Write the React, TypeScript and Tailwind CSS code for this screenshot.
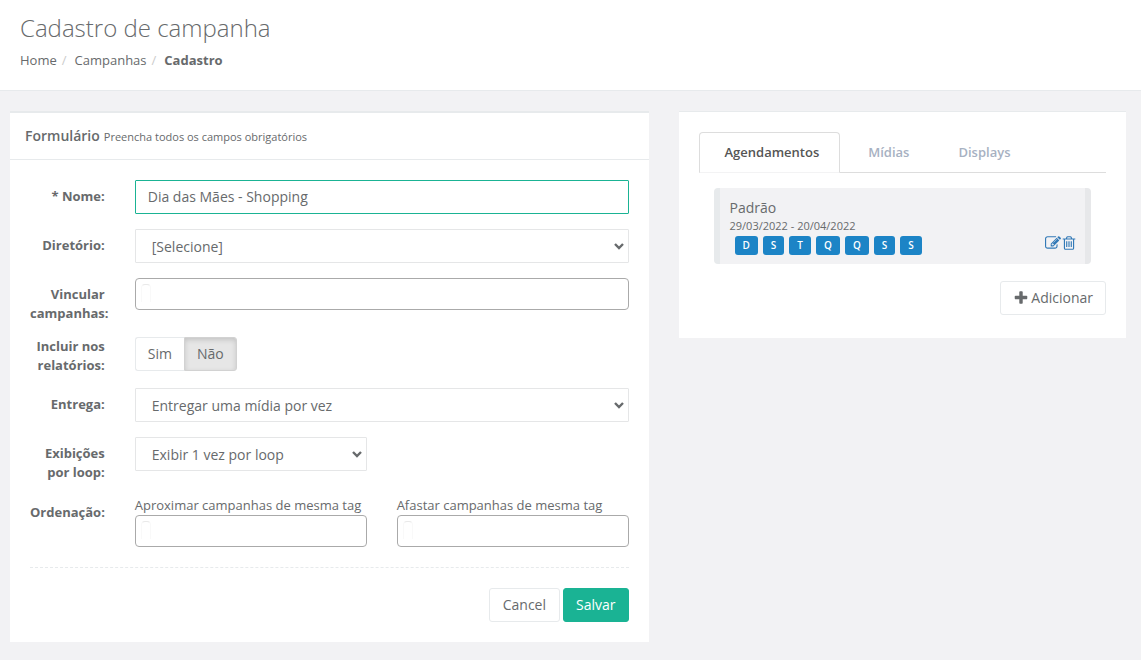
import { useState, type ReactNode } from "react";

const weekdays = ["D", "S", "T", "Q", "Q", "S", "S"];
const tabs = ["Agendamentos", "Mídias", "Displays"];

const labelClass = "w-2/12 shrink-0 px-[15px] text-right text-[13px] leading-[19px] font-bold";
const buttonClass = "h-[34px] rounded-[3px] border text-sm";

function Icon({ d, className }: { d: string; className: string }) {
  return (
    <svg viewBox="0 0 1792 1792" fill="currentColor" className={className} aria-hidden="true">
      <path d={d} />
    </svg>
  );
}

const EDIT =
  "M888 1184l116-116-152-152-116 116v56h96v96h56zm440-720q-16-16-33 1l-350 350q-17 17-1 33t33-1l350-350q17-17 1-33zm80 594v190q0 119-84.5 203.5t-203.5 84.5h-832q-119 0-203.5-84.5t-84.5-203.5v-832q0-119 84.5-203.5t203.5-84.5h832q63 0 117 25 15 7 18 23 3 17-9 29l-49 49q-14 14-32 8-23-6-45-6h-832q-66 0-113 47t-47 113v832q0 66 47 113t113 47h832q66 0 113-47t47-113v-126q0-13 9-22l64-64q15-15 35-7t20 29zm-96-738l288 288-672 672h-288v-288zm444 132l-92 92-288-288 92-92q28-28 68-28t68 28l152 152q28 28 28 68t-28 68z";
const TRASH =
  "M704 736v576q0 14-9 23t-23 9h-64q-14 0-23-9t-9-23v-576q0-14 9-23t23-9h64q14 0 23 9t9 23zm256 0v576q0 14-9 23t-23 9h-64q-14 0-23-9t-9-23v-576q0-14 9-23t23-9h64q14 0 23 9t9 23zm256 0v576q0 14-9 23t-23 9h-64q-14 0-23-9t-9-23v-576q0-14 9-23t23-9h64q14 0 23 9t9 23zm128 724v-948h-896v948q0 22 7 40.5t14.5 27 10.5 8.5h832q3 0 10.5-8.5t14.5-27 7-40.5zm-672-1076h448l-48-117q-7-9-17-11h-317q-10 2-17 11zm928 32v64q0 14-9 23t-23 9h-96v948q0 83-47 143.5t-113 60.5h-832q-66 0-113-58.5t-47-141.5v-952h-96q-14 0-23-9t-9-23v-64q0-14 9-23t23-9h309l70-167q15-37 54-63t79-26h320q40 0 79 26t54 63l70 167h309q14 0 23 9t9 23z";
const PLUS =
  "M1600 736v192q0 40-28 68t-68 28h-416v416q0 40-28 68t-68 28h-192q-40 0-68-28t-28-68v-416h-416q-40 0-68-28t-28-68v-192q0-40 28-68t68-28h416v-416q0-40 28-68t68-28h192q40 0 68 28t28 68v416h416q40 0 68 28t28 68z";

function Field({ label, htmlFor, children }: { label: string; htmlFor: string; children: ReactNode }) {
  return (
    <div className="-mx-[15px] flex">
      <label htmlFor={htmlFor} className={`${labelClass} -mb-px pt-[7px]`}>
        {label}
      </label>
      <div className="min-w-0 flex-1 px-[15px]">{children}</div>
    </div>
  );
}

function Select({ id, option }: { id: string; option: string }) {
  return (
    <div className="relative">
      <select
        id={id}
        className="h-[34px] w-full appearance-none rounded-[1px] border border-[#e5e6e7] bg-white pt-[2px] pr-6 pl-4 text-sm text-[#676a6c]"
      >
        <option>{option}</option>
      </select>
      <svg
        viewBox="0 0 10 7"
        fill="none"
        stroke="currentColor"
        strokeWidth="2.4"
        className="pointer-events-none absolute top-[14px] right-[5px] h-[7px] w-[10px]"
        aria-hidden="true"
      >
        <path d="M1 1l4 4 4-4" />
      </svg>
    </div>
  );
}

function TagBox({ id }: { id: string }) {
  return (
    <div className="flex h-8 items-start rounded-[4px] border border-[#aaaaaa] bg-white px-[5px] pt-[5px]">
      <input
        id={id}
        type="text"
        className="h-[18px] w-[10px] rounded-t-[4px] border border-b-0 border-x-[#f9f9f9] border-t-[#e9e9e9] outline-none"
      />
    </div>
  );
}

export default function App() {
  const [name, setName] = useState("Dia das Mães - Shopping");
  const [report, setReport] = useState(false);
  const [tab, setTab] = useState("Agendamentos");

  return (
    <div className="min-h-screen bg-[#f2f2f4] font-['Open_Sans',sans-serif] text-[13px] leading-[19px] text-[#676a6c]">
      <header className="border-b border-[#e7eaec] bg-white px-5 pt-[15px] pb-5">
        <h1 className="text-2xl leading-[26px] font-light">Cadastro de campanha</h1>
        <nav aria-label="Navegação" className="mt-[10px]">
          <ol className="flex">
            <li>
              <a href="#home">Home</a>
            </li>
            <li className="before:px-[5px] before:text-[#cccccc] before:content-['/']">
              <a href="#campanhas" className="pl-[3px]">Campanhas</a>
            </li>
            <li className="before:px-[5px] before:text-[#cccccc] before:content-['/']">
              <strong className="pl-[3px]">Cadastro</strong>
            </li>
          </ol>
        </nav>
      </header>

      <main className="-ml-[5px] flex items-start pt-5 pb-[18px]">
        <div className="w-7/12 px-[15px]">
          <section className="border-t-2 border-[#e7eaec] bg-white">
            <div className="flex h-[47px] items-center gap-1 border-b border-[#e7eaec] px-[15px]">
              <h2 className="text-sm font-semibold">Formulário</h2>
              <small className="text-[11px]">Preencha todos os campos obrigatórios</small>
            </div>
            <form className="flex flex-col gap-[15px] p-5" onSubmit={(e) => e.preventDefault()}>
              <Field label="* Nome:" htmlFor="nome">
                <input
                  id="nome"
                  type="text"
                  value={name}
                  onChange={(e) => setName(e.target.value)}
                  className="h-[34px] w-full rounded-[1px] border border-[#1ab394] px-3 pb-[2px] text-sm outline-none"
                />
              </Field>
              <Field label="Diretório:" htmlFor="diretorio">
                <Select id="diretorio" option="[Selecione]" />
              </Field>
              <Field label="Vincular campanhas:" htmlFor="vincular">
                <TagBox id="vincular" />
              </Field>
              <div className="-mx-[15px] flex h-9" role="group" aria-labelledby="relatorios">
                <span id="relatorios" className={labelClass}>
                  Incluir nos relatórios:
                </span>
                <div className="flex px-[15px]">
                  <button
                    type="button"
                    aria-pressed={report}
                    onClick={() => setReport(true)}
                    className={`h-[34px] rounded-l-[3px] border border-r-0 px-3 text-sm ${
                      report ? "border-[#d2d2d2] bg-[#e6e6e6] inset-shadow-[0_2px_5px_rgba(0,0,0,0.15)]" : "border-[#e7eaec] bg-white"
                    }`}
                  >
                    Sim
                  </button>
                  <button
                    type="button"
                    aria-pressed={!report}
                    onClick={() => setReport(false)}
                    className={`h-[34px] rounded-r-[3px] border px-3 text-sm ${
                      report ? "border-[#e7eaec] bg-white" : "border-[#d2d2d2] bg-[#e6e6e6] inset-shadow-[0_2px_5px_rgba(0,0,0,0.15)]"
                    }`}
                  >
                    Não
                  </button>
                </div>
              </div>
              <Field label="Entrega:" htmlFor="entrega">
                <Select id="entrega" option="Entregar uma mídia por vez" />
              </Field>
              <Field label="Exibições por loop:" htmlFor="exibicoes">
                <div className="grid grid-cols-2 gap-[30px]">
                  <Select id="exibicoes" option="Exibir 1 vez por loop" />
                </div>
              </Field>
              <Field label="Ordenação:" htmlFor="aproximar">
                <div className="grid grid-cols-2 gap-[30px]">
                  <div>
                    <label htmlFor="aproximar" className="block">
                      Aproximar campanhas de mesma tag
                    </label>
                    <TagBox id="aproximar" />
                  </div>
                  <div>
                    <label htmlFor="afastar" className="block">
                      Afastar campanhas de mesma tag
                    </label>
                    <TagBox id="afastar" />
                  </div>
                </div>
              </Field>
              <div className="mt-[5px] flex justify-end gap-[3px] border-t border-dashed border-[#e7eaec] pt-5">
                <button type="button" className={`${buttonClass} border-[#e7eaec] bg-white px-[13px]`}>
                  Cancel
                </button>
                <button type="submit" className={`${buttonClass} border-[#1ab394] bg-[#1ab394] px-3 text-white`}>
                  Salvar
                </button>
              </div>
            </form>
          </section>
        </div>

        <div className="w-5/12 px-[15px]">
          <section className="border-t border-[#e7eaec] bg-white px-5 pt-5 pb-[23px]">
            <div role="tablist" className="flex gap-[2px] border-b border-[#dddddd]">
              {tabs.map((t) => (
                <button
                  key={t}
                  type="button"
                  role="tab"
                  aria-selected={t === tab}
                  onClick={() => setTab(t)}
                  className={`-mb-px h-[41px] rounded-t-[4px] border pr-5 pl-[25px] font-semibold ${
                    t === tab
                      ? "border-[#dddddd] border-b-[#f3f3f4] bg-white text-[#555555]"
                      : "border-transparent text-[#a7b1c2]"
                  }`}
                >
                  {t}
                </button>
              ))}
            </div>
            <div className="mx-[15px] mt-[15px] flex items-end justify-between rounded-[4px] border-x-[6px] border-l-[#e7eaec] border-r-[#e7e8ea] bg-[#f2f2f4] pt-[10px] pr-2 pb-[9px] pl-[10px]">
              <div>
                <h3 className="text-sm leading-5">Padrão</h3>
                <p className="text-[11px] leading-4">29/03/2022 - 20/04/2022</p>
                <ul className="mt-[2px] ml-[5px] flex gap-[5px]">
                  {weekdays.map((d, i) => (
                    <li
                      key={i}
                      className="rounded-[3px] bg-[#1c84c6] px-2 text-[10px] leading-[19px] font-semibold text-white"
                    >
                      {d}
                    </li>
                  ))}
                </ul>
              </div>
              <div className="mb-1 flex text-[#337ab7]">
                <button type="button" aria-label="Editar">
                  <Icon d={EDIT} className="size-4" />
                </button>
                <button type="button" aria-label="Excluir">
                  <Icon d={TRASH} className="size-4" />
                </button>
              </div>
            </div>
            <div className="mt-[17px] flex justify-end">
              <button type="button" className={`${buttonClass} flex items-center gap-[2px] border-[#e7eaec] bg-white px-3`}>
                <Icon d={PLUS} className="size-4" />
                Adicionar
              </button>
            </div>
          </section>
        </div>
      </main>
    </div>
  );
}
